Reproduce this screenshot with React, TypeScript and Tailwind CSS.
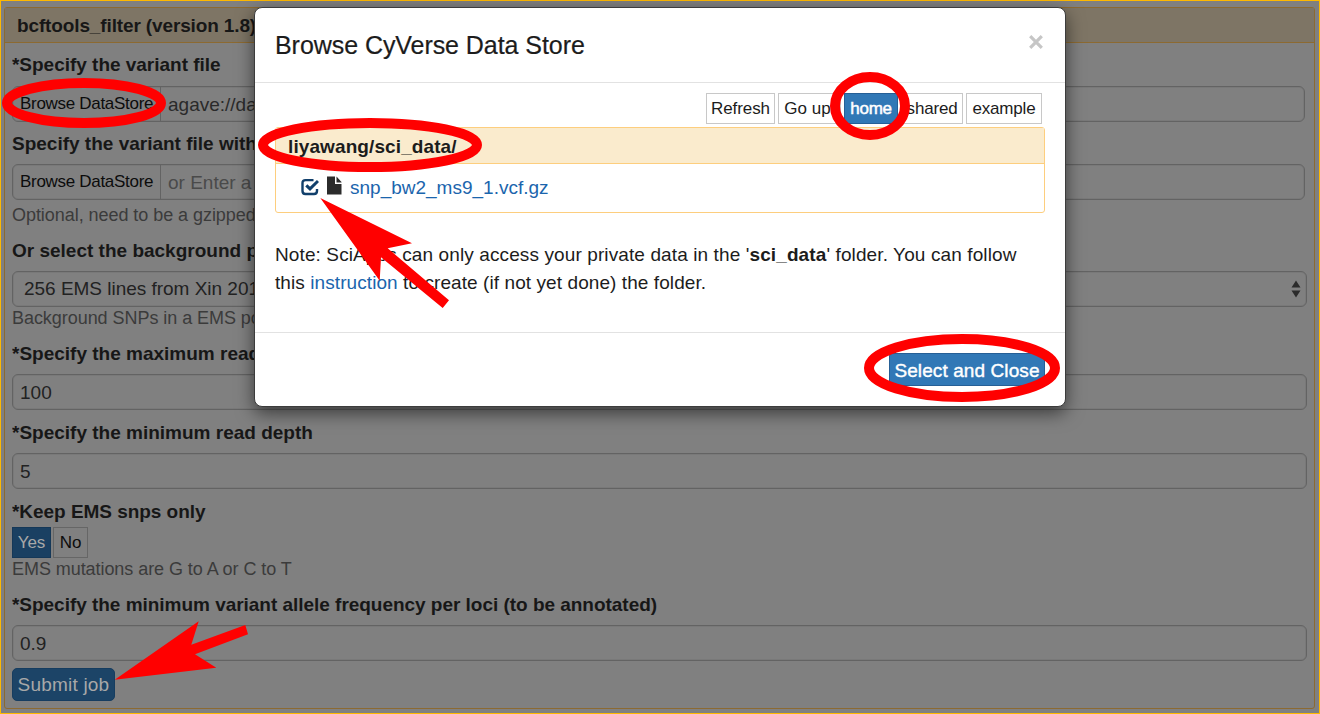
import type { ReactNode } from "react";

function Label({ className, children }: { className: string; children: ReactNode }) {
  return (
    <div className={`flex shrink-0 items-center overflow-hidden whitespace-nowrap font-bold text-[#171717] ${className}`}>
      {children}
    </div>
  );
}

function Help({ className, children }: { className: string; children: ReactNode }) {
  return (
    <div className={`flex shrink-0 items-center whitespace-nowrap text-[18px] text-[#3b3b3b] ${className}`}>
      {children}
    </div>
  );
}

function Field({ children }: { children: ReactNode }) {
  return (
    <div className="flex h-9 shrink-0 items-center rounded-md border border-[#636363] px-[7px] pt-px text-[#222] shadow-[inset_0_0_0_1px_rgba(0,0,0,0.05)]">
      {children}
    </div>
  );
}

function FileField({ value, valueClass }: { value: string; valueClass: string }) {
  return (
    <div className="mr-0.5 flex h-9 shrink-0 overflow-hidden rounded-md border border-[#636363] whitespace-nowrap shadow-[inset_0_0_0_1px_rgba(0,0,0,0.05)]">
      <div className="flex w-[148px] shrink-0 items-center border-r border-[#636363] pl-[7px] pb-0.5 text-[17px] text-[#0c0c0c]">
        <span className="tracking-[-0.3px]">Browse DataStore</span>
      </div>
      <div className={`flex items-center pl-[7px] ${valueClass}`}>{value}</div>
    </div>
  );
}

function ToolButton({ className, children }: { className: string; children: ReactNode }) {
  return (
    <button className={`flex h-[31px] shrink-0 items-center justify-center border text-[17px] ${className}`}>
      {children}
    </button>
  );
}

function CheckedBox() {
  return (
    <svg width="18" height="18" viewBox="0 0 18 18" fill="none" stroke="#113f6b">
      <path d="M12.5 2.1H4.5Q1.5 2.1 1.5 5V13Q1.5 16 4.5 16H13Q16 16 16 13V11" strokeWidth="2.4" />
      <path d="M5.3 7.3L9 10.9L17 3" strokeWidth="3" />
    </svg>
  );
}

function FileIcon() {
  return (
    <svg width="15" height="19" viewBox="0 0 15 19" fill="#2b2b2b">
      <path d="M0 0.5H8V8H14.5V18.5H0Z" />
      <path d="M9.5 0.5L14.5 6V6.6H9.5Z" />
    </svg>
  );
}

function JobForm() {
  return (
    <div className="flex h-full flex-col border border-[#ffb900] bg-[#808080] pb-1 pl-[3px] pr-1 pt-1.5">
      <div className="flex flex-1 flex-col rounded-[3px] border border-[#8c6a32]">
        <div className="flex h-[35px] shrink-0 items-center border-b border-[#8c6a32] bg-[#7e7565] pl-3 font-bold text-[#171717]">
          <span className="tracking-[-0.13px]">bcftools_filter (version 1.8)</span>
        </div>
        <div className="flex flex-1 flex-col pl-[7px] pr-[7px]">
          <Label className="h-[43px] tracking-[-0.02px]">*Specify the variant file</Label>
          <FileField value="agave://data.iplantcollaborative.org" valueClass="w-[130px] text-[#2a2a2a]" />
          <Label className="h-[42px]">Specify the variant file with</Label>
          <FileField value="or Enter a URL" valueClass="w-[130px] text-[#4a4a4a]" />
          <Help className="h-[30px] tracking-[-0.05px]">Optional, need to be a gzipped VCF</Help>
          <Label className="h-[41px]">Or select the background p</Label>
          <div className="flex h-9 shrink-0 items-center justify-between rounded-md border border-[#636363] pl-[11px] pr-[5px] text-[#222] shadow-[inset_0_0_0_1px_rgba(0,0,0,0.05)]">
            <span className="pb-px tracking-[-0.02px]">256 EMS lines from Xin 2015</span>
            <svg width="10" height="18" viewBox="0 0 10 18" fill="#2b2b2b">
              <path d="M0.5 7.5L5 0.5L9.5 7.5ZM0.5 10.5H9.5L5 17.5Z" />
            </svg>
          </div>
          <Help className="h-[22px] tracking-[-0.05px]">Background SNPs in a EMS population</Help>
          <Label className="h-[45px] pt-1">*Specify the maximum read depth</Label>
          <Field>100</Field>
          <Label className="h-[43px] pt-0.5">*Specify the minimum read depth</Label>
          <Field>5</Field>
          <Label className="h-[38px] pt-1.5 tracking-[-0.04px]">*Keep EMS snps only</Label>
          <div className="flex shrink-0 gap-0.5">
            <ToolButton className="w-[39px] border-[#153858] bg-[#1a4062] text-[#a8a8a8]">Yes</ToolButton>
            <ToolButton className="w-[35px] border-[#666] text-[#0c0c0c]">No</ToolButton>
          </div>
          <Help className="h-[22px] tracking-[-0.06px]">EMS mutations are G to A or C to T</Help>
          <Label className="h-[45px] pt-1 tracking-[-0.03px]">
            *Specify the minimum variant allele frequency per loci (to be annotated)
          </Label>
          <Field>0.9</Field>
          <button className="mt-[7px] flex h-[33px] w-[103px] shrink-0 items-center justify-center rounded-[5px] border border-[#163d60] bg-[#1c4467] tracking-[0.2px] text-[#a8a8a8]">
            Submit job
          </button>
        </div>
      </div>
    </div>
  );
}

function BrowseDialog() {
  return (
    <div className="absolute left-[254px] top-[7px] flex h-[400px] w-[812px] flex-col rounded-lg border border-[#3c3c3c] bg-white text-[#1c1c1c] shadow-[0_6px_18px_rgba(0,0,0,0.55)]">
      <div className="flex h-[75px] shrink-0 justify-between border-b border-[#e2e2e2] pl-5 pr-[22px] pt-[21px]">
        <h4 className="text-[25px] leading-[33px] tracking-[-0.06px] [-webkit-text-stroke:0.2px_currentColor]">
          Browse CyVerse Data Store
        </h4>
        <svg className="mt-1.5" width="14" height="14" viewBox="0 0 14 14" stroke="#c6c6c6" strokeWidth="3.2">
          <path d="M1.2 1.2L12.8 12.8M12.8 1.2L1.2 12.8" />
        </svg>
      </div>
      <div className="flex h-[250px] shrink-0 flex-col border-b border-[#e2e2e2] px-5 pt-2.5">
        <div className="flex shrink-0 justify-end gap-[3px] pr-[3px]">
          <ToolButton className="w-[69px] border-[#c8c8c8] tracking-[-0.5px]">
            <span className="tracking-[-0.1px]">Refresh</span>
          </ToolButton>
          <ToolButton className="w-[63px] border-[#c8c8c8] pr-1">Go up</ToolButton>
          <ToolButton className="w-[54px] border-[#265f96] bg-[#3178b6] tracking-[-0.2px] text-white [-webkit-text-stroke:0.5px_currentColor]">
            home
          </ToolButton>
          <ToolButton className="w-[62px] border-[#c8c8c8] tracking-[-0.2px]">shared</ToolButton>
          <ToolButton className="w-[76px] border-[#c8c8c8] tracking-[-0.2px]">example</ToolButton>
        </div>
        <div className="mt-[3px] flex h-[86px] shrink-0 flex-col rounded-[3px] border border-[#fdce7e]">
          <div className="flex h-9 shrink-0 items-center border-b border-[#fdce7e] bg-[#faebcd] pl-3 pt-0.5 font-bold tracking-[0.1px]">
            liyawang/sci_data/
          </div>
          <div className="flex flex-1 items-center pb-0.5 pl-[25px]">
            <CheckedBox />
            <span className="mb-[3px] ml-2">
              <FileIcon />
            </span>
            <a className="ml-2 text-[#1b65ad]">snp_bw2_ms9_1.vcf.gz</a>
          </div>
        </div>
        <p className="mt-7 whitespace-nowrap leading-[28px]">
          <span className="tracking-[0.11px]">
            Note: SciApps can only access your private data in the '<b>sci_data</b>' folder. You can follow
          </span>
          <br />
          <span className="tracking-[0.08px]">
            this <a className="text-[#1b65ad]">instruction</a> to create (if not yet done) the folder.
          </span>
        </p>
      </div>
      <div className="flex flex-1 justify-end pr-5 pt-5">
        <button className="flex h-[33px] w-[156px] items-center justify-center rounded-[3px] border border-[#265f96] bg-[#3178b6] pt-px text-[19px] tracking-[0.1px] text-white [-webkit-text-stroke:0.4px_currentColor]">
          Select and Close
        </button>
      </div>
    </div>
  );
}

function Annotations() {
  return (
    <svg className="pointer-events-none absolute inset-0" width="1320" height="714" viewBox="0 0 1320 714">
      <g fill="none" stroke="#ff0000" strokeWidth="10">
        <ellipse cx="84" cy="103" rx="77" ry="20" />
        <ellipse cx="370" cy="145" rx="107" ry="22" />
        <ellipse cx="870" cy="106" rx="35" ry="29" />
        <ellipse cx="962" cy="368" rx="93" ry="29" />
      </g>
      <g fill="#ff0000">
        <path d="M320.3 198L412 243.3L387.7 248.3L449 300.3L442.7 308L381 257.3L379.7 280.7Z" />
        <path d="M114.7 679.7L198.7 621.3L191.3 644.7L245.3 625L248 634.3L195 654.3L216.3 667.7Z" />
      </g>
    </svg>
  );
}

export default function App() {
  return (
    <div className="relative h-[714px] w-[1320px] overflow-hidden font-['Liberation_Sans',Arial,sans-serif] text-[19px] leading-none">
      <JobForm />
      <BrowseDialog />
      <Annotations />
    </div>
  );
}
